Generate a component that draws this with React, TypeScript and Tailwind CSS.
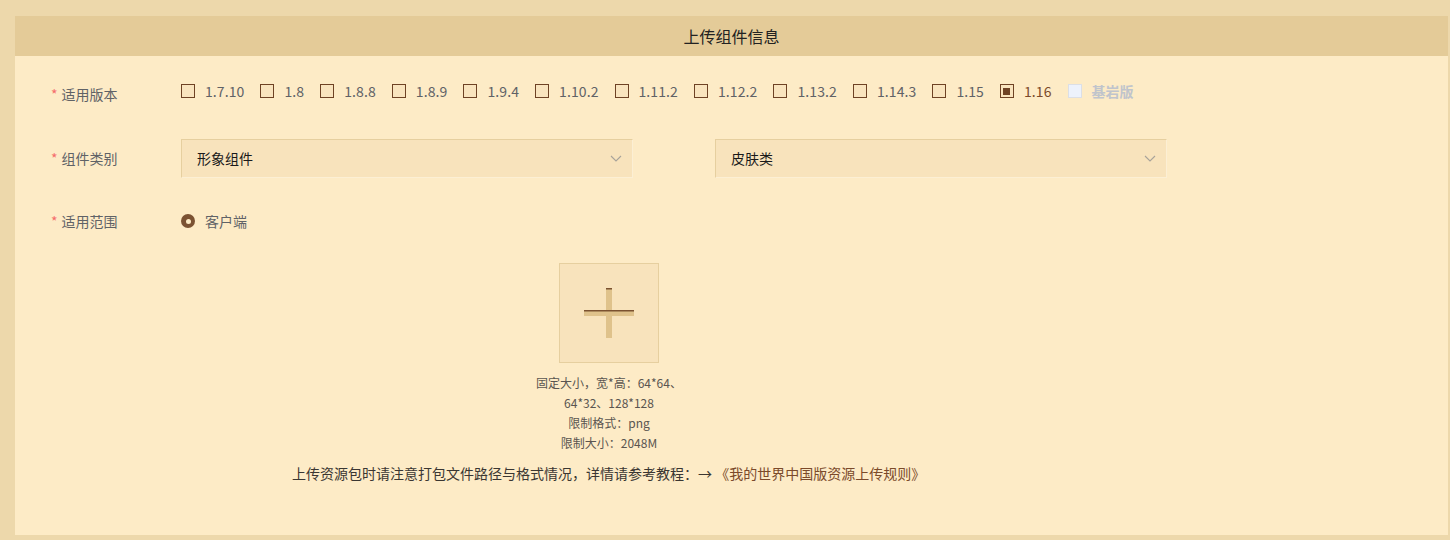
import { useState } from "react";

const versions = [
  "1.7.10",
  "1.8",
  "1.8.8",
  "1.8.9",
  "1.9.4",
  "1.10.2",
  "1.11.2",
  "1.12.2",
  "1.13.2",
  "1.14.3",
  "1.15",
  "1.16",
];

const font = { fontFamily: '"Noto Sans CJK SC", "Noto Sans", sans-serif' };

// 表单左侧标签
const Label = ({ text, className = "" }: { text: string; className?: string }) => (
  <div className={`w-[166px] shrink-0 pl-9 text-[14px] text-[#606266] ${className}`}>
    <span className="text-[#f56c6c] mr-1">*</span>
    {text}
  </div>
);

const Chevron = () => (
  <svg width="12" height="8" viewBox="0 0 12 8" fill="none">
    <polyline points="1,1 6,6 11,1" stroke="#a8a39a" strokeWidth="1.1" />
  </svg>
);

const Select = ({ value }: { value: string }) => (
  <div className="w-[452px] h-[39px] flex items-center justify-between pl-[15px] pr-[10px] bg-[#f8e3bc] border-t border-l border-[#e6cf9f] border-b border-r border-b-[#fcefd4] border-r-[#fcefd4] text-[14px] text-[#1a1a1a]">
    <span>{value}</span>
    <Chevron />
  </div>
);

const App = () => {
  const [checked, setChecked] = useState<string[]>(["1.16"]);

  const toggle = (v: string) =>
    setChecked((c) => (c.includes(v) ? c.filter((x) => x !== v) : [...c, v]));

  return (
    <div
      className="w-[1450px] h-[540px] bg-[#edd8ab] pt-4 pl-[15px] pr-[2px] pb-[5px]"
      style={font}
    >
      <div className="h-full bg-[#fdebc6] flex flex-col">
        <div className="h-10 shrink-0 bg-[#e4cb98] flex items-center justify-center text-[16px] text-[#222]">
          上传组件信息
        </div>

        {/* 适用版本 */}
        <div className="flex items-start mt-6 h-[22px]">
          <Label text="适用版本" className="pt-[3px] leading-[22px]" />
          <div className="flex items-center h-[22px]">
            {versions.map((v) => {
              const on = checked.includes(v);
              return (
                <label
                  key={v}
                  className="flex items-center mr-4 cursor-pointer"
                  onClick={() => toggle(v)}
                >
                  <span className="w-[14px] h-[14px] border-[1.5px] border-[#6e4224] bg-[#f9e4be] flex items-center justify-center">
                    {on && <span className="w-[7px] h-[7px] bg-[#6e4224]" />}
                  </span>
                  <span
                    className={`ml-[10px] text-[14px] tracking-[0.1px] ${on ? "text-[#7b4a2a]" : "text-[#606266]"}`}
                  >
                    {v}
                  </span>
                </label>
              );
            })}
            <label className="flex items-center">
              <span className="w-[14px] h-[14px] border border-[#dcdfe6] bg-[#edf2fc]" />
              <span className="ml-[10px] text-[14px] font-semibold text-[#c0c4cc]">基岩版</span>
            </label>
          </div>
        </div>

        {/* 组件类别 */}
        <div className="flex items-center mt-[37px]">
          <Label text="组件类别" />
          <Select value="形象组件" />
          <div className="ml-[82px]">
            <Select value="皮肤类" />
          </div>
        </div>

        {/* 适用范围 */}
        <div className="flex items-center h-[22px] mt-[32px]">
          <Label text="适用范围" />
          <span className="w-[14px] h-[14px] rounded-full bg-[#7b5232] flex items-center justify-center">
            <span className="w-[5px] h-[5px] rounded-full bg-[#fdebc6]" />
          </span>
          <span className="ml-[10px] text-[14px] text-[#606266]">客户端</span>
        </div>

        {/* 上传 */}
        <div className="ml-[514px] w-[160px] mt-[31px] flex flex-col items-center">
          <div className="w-[100px] h-[100px] bg-[#f8e3bc] border border-[#e6cf9f] flex items-center justify-center">
            <svg width="50" height="50" viewBox="0 0 50 50">
              <rect x="22" y="0" width="6" height="50" fill="#dfc28b" />
              <rect x="0" y="22" width="50" height="6" fill="#dfc28b" />
              <rect x="0" y="22" width="50" height="1.5" fill="#7b5230" />
              <rect x="22" y="0" width="6" height="1.5" fill="#7b5230" />
            </svg>
          </div>
          <div className="mt-[10px] text-[12px] leading-5 text-[#5a5550] text-center whitespace-nowrap">
            <div>固定大小，宽*高：64*64、</div>
            <div>64*32、128*128</div>
            <div>限制格式：png</div>
            <div>限制大小：2048M</div>
          </div>
        </div>

        <div className="ml-[277px] mt-[10px] text-[14px] leading-5 text-[#3a3632]">
          上传资源包时请注意打包文件路径与格式情况，详情请参考教程：→{" "}
          <span className="text-[#7b4a2a]">《我的世界中国版资源上传规则》</span>
        </div>
      </div>
    </div>
  );
};

export default App;
